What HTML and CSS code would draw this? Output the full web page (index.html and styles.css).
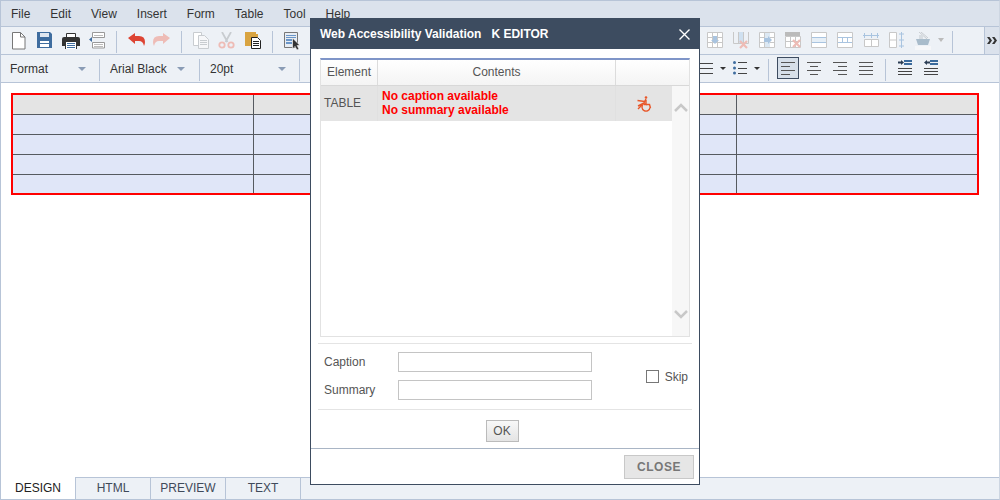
FILE: index.html
```html
<!DOCTYPE html>
<html lang="en">
<head>
  <meta charset="UTF-8" />
  <title>K EDITOR</title>
  <link rel="stylesheet" href="styles.css">
</head>
<body>
  <div class="editor">
    <div class="menubar">
      <span>File</span><span>Edit</span><span>View</span><span>Insert</span><span>Form</span><span>Table</span><span>Tool</span><span>Help</span>
    </div>

    <div class="toolbar">
      <div class="tool-group">
        <svg class="ico" viewBox="0 0 18 18"><path d="M2.500.500h8l4.500 4.500v12h-12.500z" fill="#fff" stroke="#777"/><path d="M10.500.500v4.500h4.500" fill="none" stroke="#777"/></svg>
        <svg class="ico" viewBox="0 0 18 18"><path d="M1 0h13l2 2v14H1z" fill="#3f6d9f"/><path d="M4 1h9v4H4z" fill="#dfe7f0"/><path d="M4 9h9v6H4z" fill="#fff"/><path d="M4 11h9v1H4z" fill="#3f6d9f"/></svg>
        <svg class="ico" viewBox="0 0 18 18"><path d="M4.500 1.500h9v4h-9z" fill="#fff" stroke="#333"/><path d="M2 5h14q2 0 2 2v7h-3v3H3v-3H0V7q0-2 2-2z" fill="#333"/><path d="M4 10h10v7H4z" fill="#fff"/><path d="M5 11h8v1H5zM5 13h8v1H5zM5 15h8v1H5z" fill="#3f6d9f"/></svg>
        <svg class="ico" viewBox="0 0 18 18"><path d="M4.500.500h12v5h-12zM4.500 10.500h12v5.500h-12z" fill="#fff" stroke="#999"/><path d="M6 3h9v1H6zM6 12h9v1H6zM6 14h9v1H6z" fill="#bbb"/><path d="M1 7.500l3-2.500v5z" fill="#3f6d9f"/></svg>
        <i class="sep"></i>
        <svg class="ico" viewBox="0 0 18 18"><path d="M1 6l7-5v3h4q6 0 6 6 0 2-1 4-1-5-5-5H8v3z" fill="#dd4433"/></svg>
        <svg class="ico" viewBox="0 0 18 18"><path d="M17 6l-7-5v3H6q-6 0-6 6 0 2 1 4 1-5 5-5h4v3z" fill="#eebcb6"/></svg>
        <i class="sep"></i>
        <svg class="ico" viewBox="0 0 18 18"><path d="M1.500.500h8v13h-8z" fill="#fff" stroke="#c8ccd0"/><path d="M6.500 3.500h6l4 4v9h-10z" fill="#f6f7f9" stroke="#c8ccd0"/><path d="M8 8h7v1H8zM8 10h7v1H8zM8 12h7v1H8z" fill="#c8ccd0"/></svg>
        <svg class="ico" viewBox="0 0 18 18"><path d="M4 0l5.500 10M13 0L7.500 10" stroke="#c8ccd0" stroke-width="1.800" fill="none"/><circle cx="4" cy="13" r="2.700" fill="none" stroke="#eebcb6" stroke-width="1.800"/><circle cx="13" cy="13" r="2.700" fill="none" stroke="#eebcb6" stroke-width="1.800"/></svg>
        <svg class="ico" viewBox="0 0 18 18"><path d="M1 0h11v2h2v12H1z" fill="#d9a441"/><path d="M7.500 5.500h6l3 3v8h-9z" fill="#fff" stroke="#222"/><path d="M9 9h6v1H9zM9 11h6v1H9zM9 13h6v1H9z" fill="#222"/></svg>
        <i class="sep"></i>
        <svg class="ico" viewBox="0 0 18 18"><path d="M1.500.500h13v15h-13z" fill="#e8edf3" stroke="#777"/><path d="M3 3h10v1H3zM3 5h10v1H3zM3 7h6v2H3zM3 10h6v2H3z" fill="#6b96c8"/><path d="M9.500 6v11l2.500-2.500 2 3.500 2-1-2-3.500h3z" fill="#333" stroke="#fff" stroke-width=".6"/></svg>
      </div>
      <div class="tool-group">
        <svg class="ico" viewBox="0 0 18 18"><path d="M1.500.500h15v15h-15zM1.500 5.500h15M1.500 10.500h15M6.500.500v15M11.500.500v15" fill="#fff" stroke="#c8c8c8"/><path d="M7 4h4v4h2l-4 4-4-4h2z" fill="#a9c4e0"/></svg>
        <svg class="ico" viewBox="0 0 18 18"><path d="M6 0h6v12H6z" fill="#cfe0f0"/><path d="M1.500 0v11.500h15V0M6.500 0v11.500M11.500 0v11.500" fill="none" stroke="#c8c8c8"/><path d="M8 9l7 7M15 9l-7 7" stroke="#eebcb6" stroke-width="2.200"/></svg>
        <svg class="ico" viewBox="0 0 18 18"><path d="M1.500.500h15v15h-15zM1.500 5.500h15M1.500 10.500h15M6.500.500v15M11.500.500v15" fill="#fff" stroke="#c8c8c8"/><path d="M7 1h5v14H7z" fill="#dce8f3"/><path d="M6 6h4V4l4 4-4 4v-2H6z" fill="#a9c4e0"/></svg>
        <svg class="ico" viewBox="0 0 18 18"><path d="M1 0h15v4H1z" fill="#bbb"/><path d="M1.500 4.500h15v11h-15zM1.500 9.500h15M6.500 4.500v11M11.500 4.500v11" fill="#fff" stroke="#c8c8c8"/><path d="M9 8l7 7M16 8l-7 7" stroke="#eebcb6" stroke-width="2.200"/></svg>
        <svg class="ico" viewBox="0 0 18 18"><path d="M1.500.500h15v15h-15z" fill="#fff" stroke="#c8c8c8"/><path d="M2 6h14v4H2z" fill="#e6eff7"/><path d="M2 5.500h14M2 10.500h14" stroke="#a9c4e0"/></svg>
        <svg class="ico" viewBox="0 0 18 18"><path d="M1.500.500h15v15h-15z" fill="#fff" stroke="#c8c8c8"/><path d="M6.500 6v5M11.500 6v5M2 5.500h14M2 10.500h14" stroke="#a9c4e0"/></svg>
        <svg class="ico" viewBox="0 0 18 18"><path d="M2.500 7.500h14v7h-14zM9.500 7.500v7" fill="#fff" stroke="#c8c8c8"/><path d="M1 3.500h16M2.500 1v5M9.500 1v5M15.500 1v5" stroke="#a9c4e0" fill="none"/></svg>
        <svg class="ico" viewBox="0 0 18 18"><path d="M1.500.500h7v15h-7zM1.500 8h7" fill="#fff" stroke="#c8c8c8"/><path d="M13.500 0v16M11 2h5M11 14h5M11 8h5" stroke="#a9c4e0" fill="none"/></svg>
        <svg class="ico" viewBox="0 0 18 18"><path d="M1 14h16v4H1z" fill="#f6f7f9"/><path d="M2 7h14l-2 6H4z" fill="#a9bccb"/><path d="M5 0l8 7M7 0l7 6" stroke="#c8ccd0" fill="none"/><path d="M5 3h4v4H5z" fill="#d8dde2"/></svg>
        <i class="caret caret-fill"></i>
        <i class="sep"></i>
        <div class="more">
          <svg width="10" height="7" viewBox="0 0 10 7"><path d="M0 0h2.500l2.500 3.500L2.500 7H0l2.500-3.500zM5 0h2.500L10 3.500 7.500 7H5l2.500-3.500z" fill="#333"/></svg>
        </div>
      </div>
    </div>

    <div class="toolbar toolbar-format">
      <div class="tool-group">
        <div class="select select-format">Format<i class="caret"></i></div>
        <i class="sep"></i>
        <div class="select select-font">Arial Black<i class="caret"></i></div>
        <i class="sep"></i>
        <div class="select select-size">20pt<i class="caret"></i></div>
        <i class="sep"></i>
      </div>
      <div class="tool-group format-right">
        <svg class="ico-list" viewBox="0 0 16 16"><path d="M0 4h15v1H0zM0 9h15v1H0zM0 14h15v1H0z" fill="#444"/></svg>
        <i class="caret caret-dark"></i>
        <svg class="ico-list" viewBox="0 0 16 16"><circle cx="2.500" cy="3.500" r="1.500" fill="#3f6d9f"/><circle cx="2.500" cy="9" r="1.500" fill="#3f6d9f"/><circle cx="2.500" cy="14" r="1.500" fill="#3f6d9f"/><path d="M6 3h9v1H6zM6 9h9v1H6zM6 14h9v1H6z" fill="#444"/></svg>
        <i class="caret caret-dark caret-end"></i>
        <i class="sep"></i>
        <div class="align align-on"><svg width="14" height="14" viewBox="0 0 14 14"><path d="M0 1h14v1H0zM0 5h9v1H0zM0 9h14v1H0zM0 13h9v1H0z" fill="#555"/></svg></div>
        <div class="align"><svg width="14" height="14" viewBox="0 0 14 14"><path d="M0 1h14v1H0zM3 5h8v1H3zM0 9h14v1H0zM3 13h8v1H3z" fill="#555"/></svg></div>
        <div class="align"><svg width="14" height="14" viewBox="0 0 14 14"><path d="M0 1h14v1H0zM5 5h9v1H5zM0 9h14v1H0zM5 13h9v1H5z" fill="#555"/></svg></div>
        <div class="align"><svg width="14" height="14" viewBox="0 0 14 14"><path d="M0 1h14v1H0zM0 5h14v1H0zM0 9h14v1H0zM0 13h14v1H0z" fill="#555"/></svg></div>
        <i class="sep"></i>
        <div class="align"><svg width="14" height="16" viewBox="0 0 14 16"><path d="M0 1.500h3V0l3 2.500L3 5V3.500H0z" fill="#2c3e55"/><path d="M6 0h8v2H6zM6 3h8v2H6z" fill="#3a6a9c"/><path d="M0 8h14v1H0zM0 11h14v1H0zM0 14h14v1H0z" fill="#444"/></svg></div>
        <div class="align"><svg width="14" height="16" viewBox="0 0 14 16"><path d="M0 2.500L3 0v1.500h3v2H3V5z" fill="#2c3e55"/><path d="M6 0h8v2H6zM6 3h8v2H6z" fill="#3a6a9c"/><path d="M0 8h14v1H0zM0 11h14v1H0zM0 14h14v1H0z" fill="#444"/></svg></div>
      </div>
    </div>

    <div class="content">
      <table class="doc-table">
        <tr class="doc-head"><td></td><td></td><td></td><td></td></tr>
        <tr><td></td><td></td><td></td><td></td></tr>
        <tr><td></td><td></td><td></td><td></td></tr>
        <tr><td></td><td></td><td></td><td></td></tr>
        <tr><td></td><td></td><td></td><td></td></tr>
      </table>
    </div>

    <div class="tabs">
      <span class="tab tab-active">DESIGN</span><span class="tab">HTML</span><span class="tab">PREVIEW</span><span class="tab">TEXT</span>
    </div>
  </div>

  <div class="modal">
    <div class="modal-title">
      <span>Web Accessibility Validation</span><span class="modal-app">K EDITOR</span>
      <svg class="modal-x" width="11" height="11" viewBox="0 0 11 11"><path d="M.5.500l10 10M10.500.500l-10 10" stroke="#fff" stroke-width="1.400"/></svg>
    </div>
    <div class="modal-body">
      <div class="grid-box">
        <div class="grid-head">
          <div class="cell-el">Element</div>
          <div class="cell-text">Contents</div>
          <div class="cell-ico"></div>
        </div>
        <div class="grid-main">
          <div class="grid-rows">
            <div class="grid-row">
              <div class="cell-el">TABLE</div>
              <div class="cell-text cell-error">No caption available<br>No summary available</div>
              <div class="cell-ico">
                <svg width="16" height="16" viewBox="0 0 16 16"><circle cx="10" cy="1.500" r="1.300" fill="#e8572a"/><path d="M1.500 4.500l7 1 1.500-2.500M10 4v4.500h-2M2 10l7-3.500M2 13l4-4" fill="none" stroke="#e8572a" stroke-width="1.400"/><path d="M7.500 8a4 4 0 1 0 6.500 3.500" fill="none" stroke="#e8572a" stroke-width="1.400"/><path d="M10 8.500h3.500l1 3.500" fill="none" stroke="#e8572a" stroke-width="1.400"/></svg>
              </div>
            </div>
          </div>
          <div class="scrollbar">
            <svg width="14" height="9" viewBox="0 0 14 9"><path d="M1 8l6-6 6 6" fill="none" stroke="#c8c8c8" stroke-width="2.500"/></svg>
            <svg width="14" height="9" viewBox="0 0 14 9"><path d="M1 1l6 6 6-6" fill="none" stroke="#c8c8c8" stroke-width="2.500"/></svg>
          </div>
        </div>
      </div>

      <div class="fields">
        <div class="field-list">
          <label class="field"><span>Caption</span><input type="text"></label>
          <label class="field"><span>Summary</span><input type="text"></label>
        </div>
        <label class="skip"><i class="checkbox"></i>Skip</label>
      </div>

      <div class="ok-row"><button class="btn-ok" type="button">OK</button></div>
    </div>
    <div class="modal-foot"><button class="btn-close" type="button">CLOSE</button></div>
  </div>
</body>
</html>
```

FILE: styles.css
```css
* {
  box-sizing: border-box;
}

html, body {
  margin: 0;
  height: 100%;
}

body {
  font-family: "Liberation Sans", Arial, sans-serif;
  font-size: 12px;
  color: #333;
  background-color: #fff;
}

.editor {
  display: flex;
  flex-direction: column;
  width: 1000px;
  height: 500px;
  border: 1px solid #b7c4d7;
  border-right-color: #cdd6e2;
  overflow: hidden;
}

.menubar {
  display: flex;
  gap: 20px;
  height: 26px;
  padding: 6px 0 0 10px;
  background-color: #dbe2ec;
  border-bottom: 1px solid #b7c4d7;
  color: #333;
  line-height: 14px;
}

.toolbar {
  display: flex;
  justify-content: space-between;
  height: 28px;
  padding-left: 5px;
  background-color: #edf1f6;
  border-bottom: 1px solid #b7c4d7;
}

.toolbar-format {
  padding-left: 9px;
}

.tool-group {
  display: flex;
  align-items: flex-start;
}

.ico {
  display: block;
  width: 18px;
  height: 18px;
  margin: 5px 4px 4px;
  flex: none;
}

.sep {
  display: block;
  width: 1px;
  height: 22px;
  margin: 4px 6px 0;
  flex: none;
  background-color: #b7c4d7;
}

.caret {
  display: block;
  width: 0;
  height: 0;
  flex: none;
  border-left: 4px solid transparent;
  border-right: 4px solid transparent;
  border-top: 4px solid #8a9cb5;
}

.caret-fill {
  margin: 11px 2px 0;
  border-left-width: 3px;
  border-right-width: 3px;
  border-top-color: #bbb;
}

.caret-dark {
  margin: 12px 6px 0;
  border-left-width: 3px;
  border-right-width: 3px;
  border-top: 3px solid #333;
}

.caret-end {
  margin-right: 2px;
}

.more {
  display: flex;
  align-items: center;
  justify-content: center;
  width: 15px;
  height: 27px;
  margin-left: 25px;
  background-color: #dbe2ec;
  border-left: 1px solid #b7c4d7;
}

.select {
  display: flex;
  align-items: center;
  justify-content: space-between;
  height: 27px;
  color: #333;
}

.select-format {
  width: 76px;
  margin-right: 7px;
}

.select-font {
  width: 77px;
  margin: 0 6px 0 4px;
  padding-right: 2px;
}

.select-size {
  width: 76px;
  margin: 0 7px 0 4px;
}

.format-right {
  padding-right: 55px;
}

.ico-list {
  display: block;
  width: 16px;
  height: 16px;
  margin-top: 4px;
  flex: none;
}

.align {
  display: flex;
  align-items: center;
  justify-content: center;
  width: 26px;
  height: 22px;
  margin-top: 2px;
}

.align-on {
  width: 22px;
  margin: 2px 2px 0 2px;
  background-color: #d6dfe9;
  border: 1px solid #3d4c60;
}

.content {
  flex: 1;
  padding: 10px 10px 0;
  background-color: #fff;
}

.doc-table {
  width: 968px;
  height: 102px;
  border-collapse: collapse;
  table-layout: fixed;
  border: 2px solid #f00;
}

.doc-table td {
  height: 20px;
  padding: 0;
  background-color: #e0e6f8;
  border: 1px solid #565a60;
}

.doc-head td {
  background-color: #e4e4e4;
}

.tabs {
  display: flex;
  height: 22px;
  background-color: #edf1f6;
  border-top: 1px solid #b7c4d7;
}

.tab {
  width: 75px;
  padding-top: 3px;
  text-align: center;
  color: #3f4a5a;
  border-right: 1px solid #b7c4d7;
}

.tab-active {
  margin-top: -1px;
  padding-top: 4px;
  background-color: #fff;
  color: #222;
}

/* popup */
.modal {
  position: absolute;
  left: 310px;
  top: 18px;
  display: flex;
  flex-direction: column;
  width: 390px;
  height: 467px;
  background-color: #fff;
  border: 1px solid #3d4c60;
}

.modal-title {
  display: flex;
  align-items: center;
  flex: none;
  height: 30px;
  padding: 0 9px;
  background-color: #3d4c60;
  color: #fff;
  font-weight: bold;
}

.modal-app {
  margin-left: 10px;
}

.modal-x {
  margin-left: auto;
}

.modal-body {
  flex: 1;
  padding: 9px 7px 0;
}

.grid-box {
  display: flex;
  flex-direction: column;
  height: 279px;
  margin: 0 2px;
  border: 1px solid #e2e2e2;
  border-top: 2px solid #7f95c8;
}

.grid-head {
  display: flex;
  flex: none;
  height: 26px;
  background: linear-gradient(#fff, #f4f4f4);
  border-bottom: 1px solid #d8d8d8;
  line-height: 25px;
  color: #555;
}

.cell-el {
  width: 57px;
  flex: none;
  text-align: center;
  border-right: 1px solid #dcdcdc;
}

.cell-text {
  width: 238px;
  flex: none;
  text-align: center;
  border-right: 1px solid #dcdcdc;
}

.cell-ico {
  flex: 1;
}

.grid-main {
  display: flex;
  flex: 1;
}

.grid-rows {
  flex: 1;
}

.grid-row {
  display: flex;
  height: 35px;
  background-color: #e4e4e4;
  color: #555;
}

.grid-row .cell-el {
  padding-left: 3px;
  text-align: left;
  line-height: 35px;
  border-right-color: #e0e0e0;
}

.grid-row .cell-ico {
  display: flex;
  align-items: center;
  justify-content: center;
}

.cell-error {
  padding: 3px 0 0 4px;
  text-align: left;
  color: #f00;
  font-weight: bold;
  line-height: 14px;
  border-right-color: #e0e0e0;
}

.scrollbar {
  display: flex;
  flex-direction: column;
  justify-content: space-between;
  align-items: center;
  width: 17px;
  flex: none;
  padding: 17px 0;
  background-color: #f7f7f7;
}

.fields {
  display: flex;
  align-items: center;
  justify-content: space-between;
  height: 67px;
  margin-top: 6px;
  padding: 0 4px 0 6px;
  border-top: 1px solid #e4e4e4;
  border-bottom: 1px solid #e4e4e4;
}

.field-list {
  display: flex;
  flex-direction: column;
  gap: 8px;
  margin-bottom: 1px;
}

.field {
  display: flex;
  align-items: center;
  color: #555;
}

.field span {
  width: 74px;
}

.field input {
  width: 194px;
  height: 20px;
  padding: 0;
  background-color: #fff;
  border: 1px solid #c4c4c4;
}

.skip {
  display: flex;
  align-items: center;
  color: #555;
}

.checkbox {
  display: block;
  width: 13px;
  height: 13px;
  margin-right: 6px;
  background-color: #fff;
  border: 1px solid #777;
}

.ok-row {
  display: flex;
  justify-content: center;
  padding: 10px 6px 0 0;
}

.btn-ok {
  width: 33px;
  height: 22px;
  padding: 0;
  font: 12px "Liberation Sans", Arial, sans-serif;
  color: #555;
  background: linear-gradient(#f8f8f8, #e4e4e4);
  border: 1px solid #bbb;
}

.modal-foot {
  display: flex;
  justify-content: flex-end;
  flex: none;
  height: 36px;
  padding: 6px 5px 0 0;
  border-top: 1px solid #a9b5c5;
}

.btn-close {
  width: 70px;
  height: 24px;
  padding: 0;
  font: bold 12px "Liberation Sans", Arial, sans-serif;
  letter-spacing: .5px;
  color: #777;
  background-color: #e6e6e6;
  border: 1px solid #c8c8c8;
}
```
